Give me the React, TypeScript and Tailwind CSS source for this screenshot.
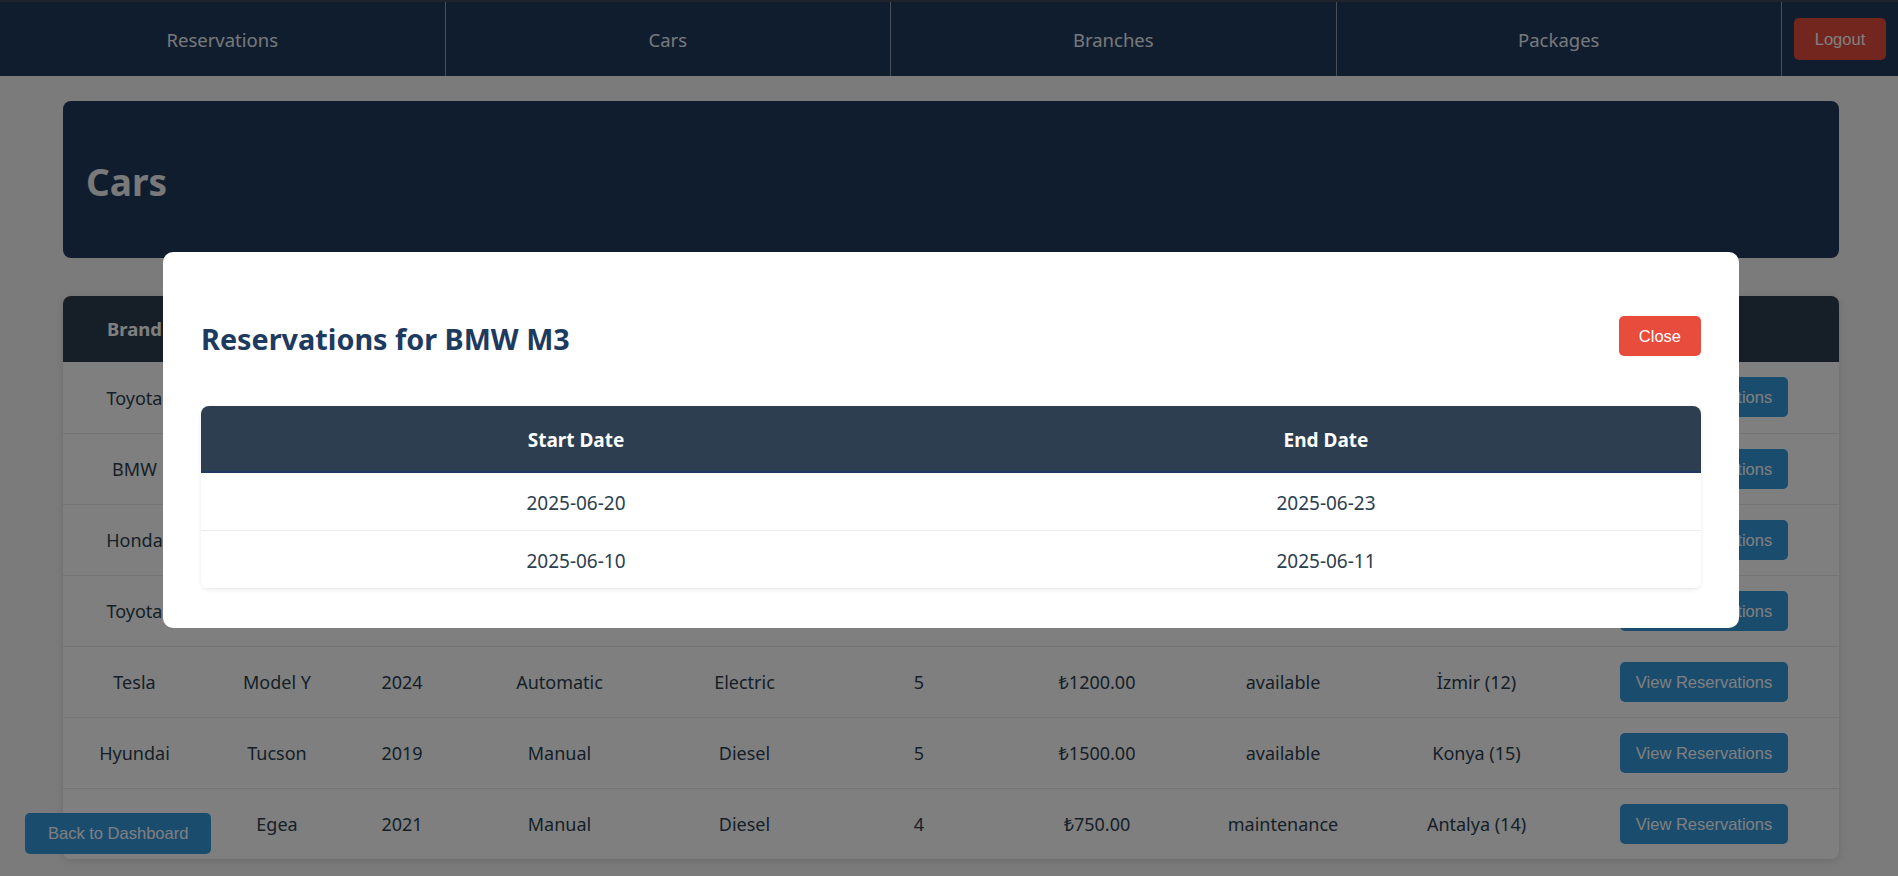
import React from "react";

const cars = [
  { brand: "Toyota", model: "Corolla", year: 2022, trans: "Automatic", fuel: "Gasoline", seats: 5, price: "₺900.00", status: "available", branch: "İstanbul (1)" },
  { brand: "BMW", model: "M3", year: 2023, trans: "Automatic", fuel: "Gasoline", seats: 4, price: "₺2500.00", status: "rented", branch: "Ankara (3)" },
  { brand: "Honda", model: "Civic", year: 2021, trans: "Manual", fuel: "Gasoline", seats: 5, price: "₺800.00", status: "available", branch: "İzmir (12)" },
  { brand: "Toyota", model: "RAV4", year: 2023, trans: "Automatic", fuel: "Hybrid", seats: 5, price: "₺1100.00", status: "available", branch: "Bursa (7)" },
  { brand: "Tesla", model: "Model Y", year: 2024, trans: "Automatic", fuel: "Electric", seats: 5, price: "₺1200.00", status: "available", branch: "İzmir (12)" },
  { brand: "Hyundai", model: "Tucson", year: 2019, trans: "Manual", fuel: "Diesel", seats: 5, price: "₺1500.00", status: "available", branch: "Konya (15)" },
  { brand: "Fiat", model: "Egea", year: 2021, trans: "Manual", fuel: "Diesel", seats: 4, price: "₺750.00", status: "maintenance", branch: "Antalya (14)" },
];

const columns = ["Brand", "Model", "Year", "Transmission", "Fuel", "Seats", "Price", "Status", "Branch", "Actions"];
const colWidths = [143, 142, 108, 207, 163, 186, 170, 202, 185, 270];

const reservations = [
  { start: "2025-06-20", end: "2025-06-23" },
  { start: "2025-06-10", end: "2025-06-11" },
];

function Navbar() {
  const links = ["Reservations", "Cars", "Branches", "Packages"];
  return (
    <nav className="flex h-[76px] bg-[#1e3a5f] border-t-2 border-[#404854]">
      {links.map((link) => (
        <a
          key={link}
          className="flex-1 flex items-center justify-center border-r border-white/50 text-[18.5px] text-[#eef1f3] pt-[1px]"
        >
          {link}
        </a>
      ))}
      <div className="w-[116px] flex items-center justify-center">
        <button className="bg-[#e74c3c] text-white rounded-[5px] px-[21px] py-[11px] leading-[20px] text-[16.5px] font-['Liberation_Sans',Arial,sans-serif]">
          Logout
        </button>
      </div>
    </nav>
  );
}

function App() {
  return (
    <div className="min-h-screen bg-[#f4f6f4] font-['Noto_Sans',sans-serif]">
      <Navbar />

      <main className="pl-[63px] pt-[25px] w-[1839px]">
        <div className="h-[157px] bg-[#1e3a5f] rounded-[8px] flex items-center pl-[23px] pt-[5px]">
          <h1 className="text-[37px] font-bold text-[#f2f2f2]">Cars</h1>
        </div>

        <div className="mt-[38px] bg-white rounded-[8px] overflow-hidden shadow-[0_2px_8px_rgba(0,0,0,0.12)]">
          <table className="w-full table-fixed border-collapse text-[18px] text-[#2c3e50]">
            <colgroup>
              {colWidths.map((w, i) => (
                <col key={i} style={{ width: w }} />
              ))}
            </colgroup>
            <thead>
              <tr className="bg-[#2c3e50] h-[66px]">
                {columns.map((c) => (
                  <th key={c} className="text-white font-bold text-[18.5px] text-center">
                    {c}
                  </th>
                ))}
              </tr>
            </thead>
            <tbody>
              {cars.map((car, i) => (
                <tr key={i} className="h-[71px] border-b border-[#e9e9e9] last:border-b-0 text-center">
                  <td className="pt-[2px]">{car.brand}</td>
                  <td className="pt-[2px]">{car.model}</td>
                  <td className="pt-[2px]">{car.year}</td>
                  <td className="pt-[2px]">{car.trans}</td>
                  <td className="pt-[2px]">{car.fuel}</td>
                  <td className="pt-[2px]">{car.seats}</td>
                  <td className="pt-[2px]">{car.price}</td>
                  <td className="pt-[2px]">{car.status}</td>
                  <td className="pt-[2px]">{car.branch}</td>
                  <td>
                    <button className="bg-[#3498db] text-white rounded-[5px] px-[16px] py-[10px] leading-[20px] text-[16.5px] font-['Liberation_Sans',Arial,sans-serif]">
                      View Reservations
                    </button>
                  </td>
                </tr>
              ))}
            </tbody>
          </table>
        </div>
      </main>

      <button className="fixed left-[25px] bottom-[22px] bg-[#3498db] text-white rounded-[5px] px-[23px] py-[10px] leading-[21px] text-[16.5px] font-['Liberation_Sans',Arial,sans-serif]">
        Back to Dashboard
      </button>

      {/* modal */}
      <div className="fixed inset-0 bg-black/50 flex items-center justify-center">
        <div className="w-[1576px] bg-white rounded-[10px] px-[38px] pt-[64px] pb-[39px] mt-[4px] ml-[4px]">
          <div className="flex items-center justify-between h-[40px]">
            <h2 className="text-[28.8px] font-bold text-[#1e3a5f] pt-[5px]">Reservations for BMW M3</h2>
            <button className="bg-[#e74c3c] text-white rounded-[5px] px-[20px] py-[10px] leading-[20px] text-[16.5px] font-['Liberation_Sans',Arial,sans-serif]">
              Close
            </button>
          </div>
          <div className="mt-[50px] rounded-[8px] overflow-hidden shadow-[0_1px_4px_rgba(0,0,0,0.08)]">
            <table className="w-full table-fixed border-collapse">
              <thead>
                <tr className="bg-[#2c3e50] h-[66px] border-b-2 border-[#1e3a5f]">
                  <th className="text-white font-bold text-[19px] pt-[2px]">Start Date</th>
                  <th className="text-white font-bold text-[19px] pt-[2px]">End Date</th>
                </tr>
              </thead>
              <tbody>
                {reservations.map((r) => (
                  <tr key={r.start} className="h-[58px] border-b border-[#ececec] text-center text-[19px] text-[#2c3e50]">
                    <td className="pt-[3px]">{r.start}</td>
                    <td className="pt-[3px]">{r.end}</td>
                  </tr>
                ))}
              </tbody>
            </table>
          </div>
        </div>
      </div>
    </div>
  );
}

export default App;
